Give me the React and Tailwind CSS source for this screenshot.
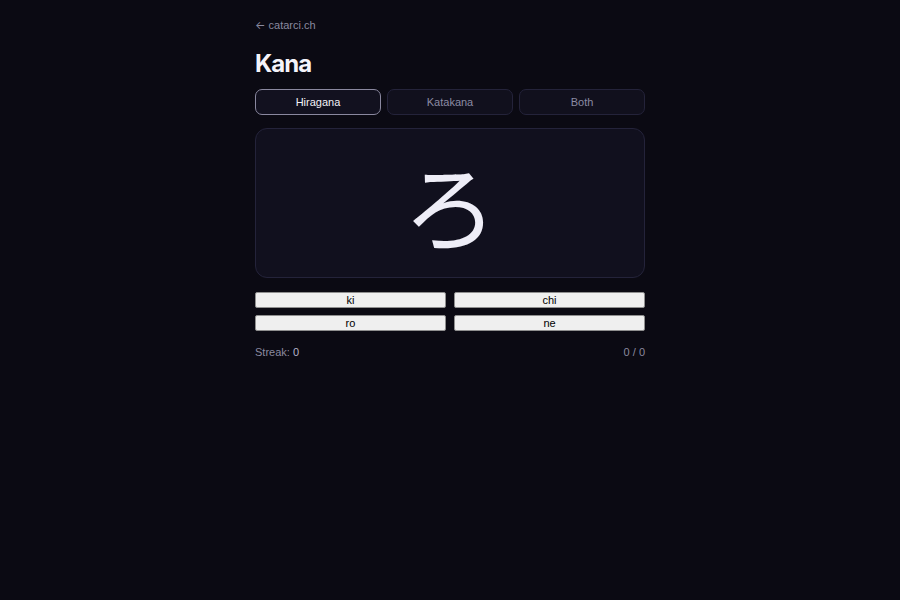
export default function App() {
  const answers = ["ki", "chi", "ro", "ne"];
  return (
    <div className="min-h-[600px] w-full bg-[#0b0a13] font-['Inter',sans-serif]">
      <div className="mx-auto w-[390px] pt-[18px]">
        <div className="font-['Liberation_Sans',sans-serif] text-[11px] leading-[14px] text-[#8a899f]">
          <span className="font-['Inter',sans-serif]">←</span> catarci.ch
        </div>
        <h1 className="mt-[17px] text-[24px] leading-[30px] font-bold tracking-[-0.04em] text-[#f4f3fa]">Kana</h1>
        <div className="mt-[10px] grid grid-cols-3 gap-[6px] font-['Liberation_Sans',sans-serif] text-[11px]">
          <button className="h-[26px] rounded-[7px] border border-[#8a889f] bg-[#12111f] text-[#f2f2f7]">Hiragana</button>
          <button className="h-[26px] rounded-[7px] border border-[#24233a] bg-[#11101d] text-[#8c8ba3]">Katakana</button>
          <button className="h-[26px] rounded-[7px] border border-[#24233a] bg-[#11101d] text-[#8c8ba3]">Both</button>
        </div>
        <div className="mt-[13px] flex h-[150px] items-center justify-center rounded-[12px] border border-[#24233a] bg-[#11101e]">
          <span className="font-['Noto_Sans_CJK_JP',sans-serif] text-[94px] leading-none font-normal text-[#eeedf7]">ろ</span>
        </div>
        <div className="mt-[14px] grid grid-cols-2 gap-x-[8px] gap-y-[7px] font-['Liberation_Sans',sans-serif]">
          {answers.map((a) => (
            <button key={a} className="h-[16px] rounded-[2px] border border-[#8f8f8f] bg-[#efefef] text-[11px] leading-[14px] text-black">{a}</button>
          ))}
        </div>
        <div className="mt-[14px] flex justify-between font-['Liberation_Sans',sans-serif] text-[11px] leading-[14px] text-[#8a899f]">
          <span>Streak: <span className="text-[#b4b3c8]">0</span></span>
          <span>0 / 0</span>
        </div>
      </div>
    </div>
  );
}
